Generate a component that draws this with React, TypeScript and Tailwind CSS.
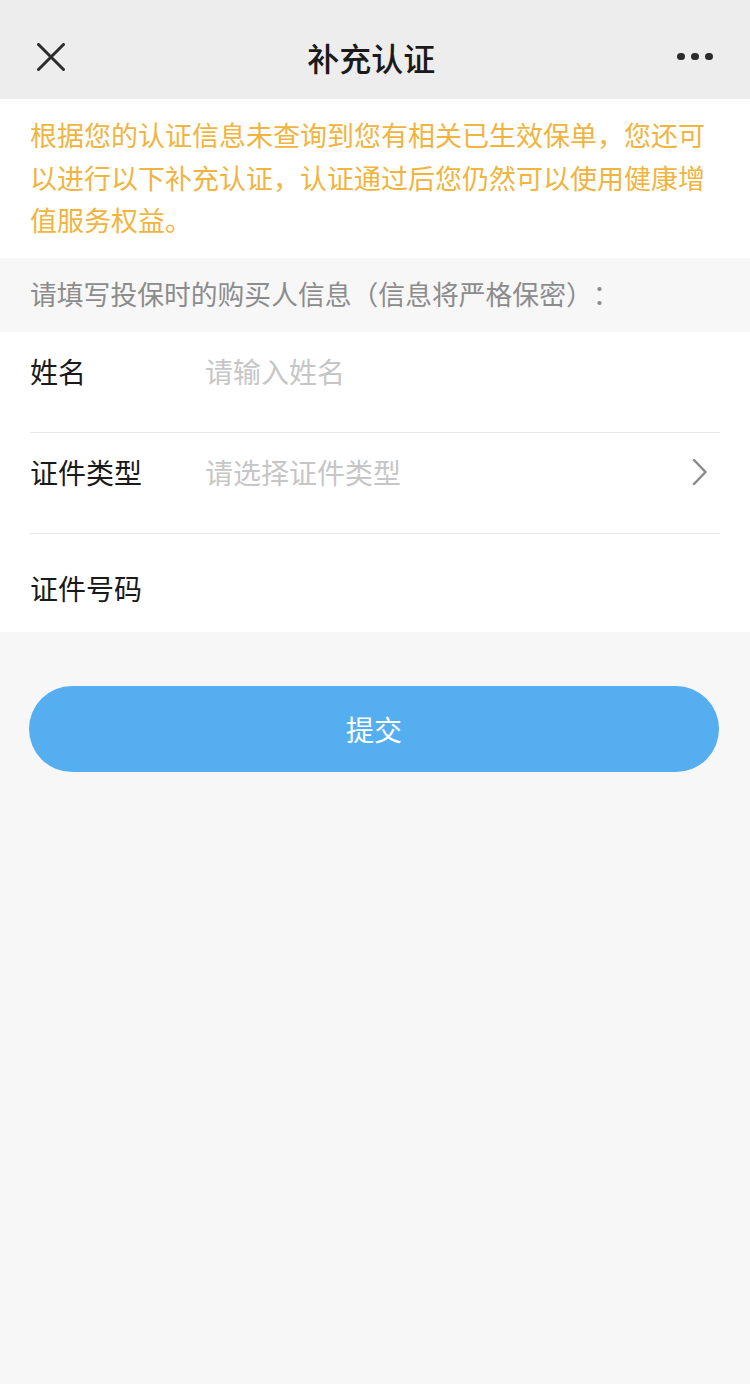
import React from "react";

const font = { fontFamily: '"Noto Sans CJK SC", "Noto Sans", sans-serif' };

const App = () => {
  return (
    <div className="min-h-[1384px] w-[750px] bg-[#f7f7f7] [text-spacing-trim:space-all]" style={font}>
      {/* header */}
      <div className="flex h-[99px] items-center justify-between bg-[#ededed] pl-[37px] pr-[37px] pt-[14px]">
        <svg width="28" height="28" viewBox="0 0 28 28">
          <path d="M1.5 1.5 L26.5 26.5 M26.5 1.5 L1.5 26.5" stroke="#2b2b2b" strokeWidth="3" strokeLinecap="round" />
        </svg>
        <div className="text-[32px] font-medium text-[#1a1a1a]">补充认证</div>
        <div className="flex items-center gap-[6.5px]">
          <span className="h-[7.5px] w-[7.5px] rounded-full bg-[#2b2b2b]" />
          <span className="h-[7.5px] w-[7.5px] rounded-full bg-[#2b2b2b]" />
          <span className="h-[7.5px] w-[7.5px] rounded-full bg-[#2b2b2b]" />
        </div>
      </div>

      {/* notice */}
      <div className="bg-white px-[30px] pb-[16px] pt-[15px] text-[27px] leading-[42.5px] text-[#f0b43f]">
        根据您的认证信息未查询到您有相关已生效保单，您还可以进行以下补充认证，认证通过后您仍然可以使用健康增值服务权益。
      </div>

      {/* section title */}
      <div className="flex h-[74px] items-center px-[30px] text-[26.8px] text-[#8c8c8c]">
        请填写投保时的购买人信息（信息将严格保密）：
      </div>

      {/* form */}
      <div className="bg-white">
        <div className="mx-[30px] flex h-[101px] items-start border-b border-[#e8e8e8] pt-[19px]">
          <div className="w-[175px] text-[28px] leading-[40px] text-[#1a1a1a]">姓名</div>
          <input
            placeholder="请输入姓名"
            className="flex-1 bg-transparent text-[28px] leading-[40px] text-[#1a1a1a] outline-none placeholder:text-[#c6c6c6]"
          />
        </div>
        <div className="mx-[30px] flex h-[101px] items-start border-b border-[#e8e8e8] pt-[19px]">
          <div className="w-[175px] text-[28px] leading-[40px] text-[#1a1a1a]">证件类型</div>
          <div className="flex-1 text-[28px] leading-[40px] text-[#c6c6c6]">请选择证件类型</div>
          <svg width="16" height="28" viewBox="0 0 16 28" className="mr-[12px] mt-[6px]">
            <path d="M2 2 L13.5 14 L2 26" fill="none" stroke="#8a8a8a" strokeWidth="2.5" strokeLinecap="round" strokeLinejoin="round" />
          </svg>
        </div>
        <div className="mx-[30px] flex h-[98px] items-center pt-[10px]">
          <div className="w-[175px] text-[28px] leading-[40px] text-[#1a1a1a]">证件号码</div>
          <input className="flex-1 bg-transparent text-[28px] outline-none" />
        </div>
      </div>

      {/* submit */}
      <div className="pl-[29px] pr-[31px] pt-[54px]">
        <button className="flex h-[86px] w-full items-center justify-center rounded-full bg-[#55aef0] text-[28px] text-white">
          提交
        </button>
      </div>
    </div>
  );
};

export default App;
